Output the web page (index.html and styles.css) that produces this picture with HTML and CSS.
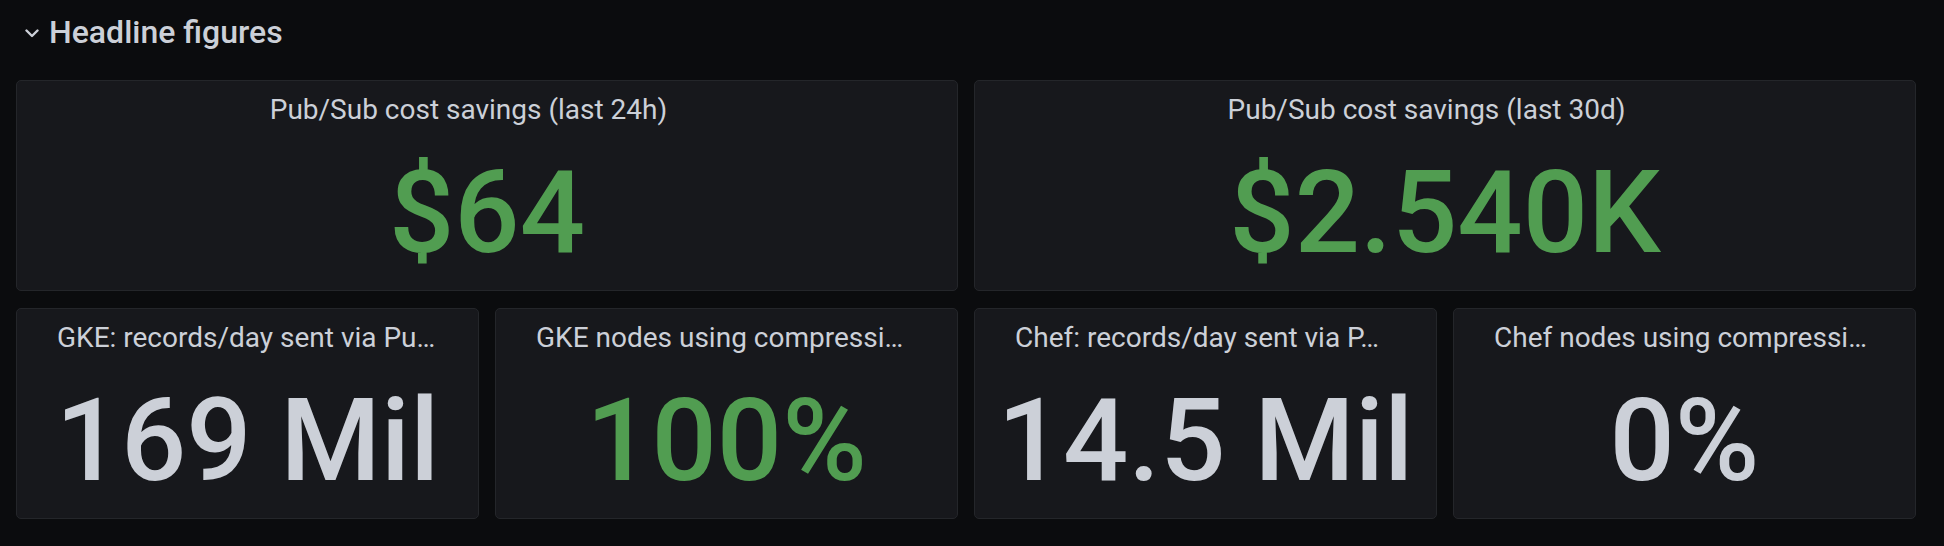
FILE: index.html
```html
<!DOCTYPE html>
<html lang="en">
<head>
<meta charset="utf-8">
<title>Headline figures</title>
<link rel="stylesheet" href="styles.css">
</head>
<body>
<main class="dashboard">
  <header class="row-header">
    <svg class="chevron" width="14" height="9" viewBox="0 0 14 9" aria-hidden="true">
      <path d="M1.5 1.5 L7 7 L12.5 1.5" fill="none" stroke="currentColor" stroke-width="2.4" stroke-linecap="round" stroke-linejoin="round"/>
    </svg>
    <h2 class="row-title">Headline figures</h2>
  </header>
  <section class="grid">
    <article class="panel panel--wide">
      <div class="panel-header panel-header--menu"><span class="panel-title">Pub/Sub cost savings (last 24h)</span></div>
      <div class="panel-value value--green">$64</div>
    </article>
    <article class="panel panel--wide">
      <div class="panel-header panel-header--menu"><span class="panel-title">Pub/Sub cost savings (last 30d)</span></div>
      <div class="panel-value value--green">$2.540K</div>
    </article>
    <article class="panel">
      <div class="panel-header"><span class="panel-title">GKE: records/day sent via Pu…</span></div>
      <div class="panel-value value--text">169 Mil</div>
    </article>
    <article class="panel">
      <div class="panel-header"><span class="panel-title">GKE nodes using compressi…</span></div>
      <div class="panel-value value--green">100%</div>
    </article>
    <article class="panel">
      <div class="panel-header"><span class="panel-title">Chef: records/day sent via P…</span></div>
      <div class="panel-value value--text">14.5 Mil</div>
    </article>
    <article class="panel">
      <div class="panel-header"><span class="panel-title">Chef nodes using compressi…</span></div>
      <div class="panel-value value--text">0%</div>
    </article>
  </section>
</main>
</body>
</html>
```
FILE: styles.css
```css
html, body {
  margin: 0;
  padding: 0;
  background: #0b0c0e;
}

body {
  font-family: Roboto, "Liberation Sans", sans-serif;
  color: #ccd0d8;
  width: 1944px;
  height: 546px;
  overflow: hidden;
}

.dashboard {
  padding: 0 28px 0 16px;
}

.row-header {
  height: 64px;
  display: flex;
  align-items: center;
  gap: 10px;
  padding-left: 9px;
  margin-bottom: 16px;
}

.chevron {
  color: #ccd0d8;
  flex: none;
  margin-top: 2px;
}

.row-title {
  margin: 0;
  font-size: 32px;
  line-height: 40px;
  font-weight: 500;
  color: #ccd0d8;
}

.grid {
  display: grid;
  grid-template-columns: repeat(4, 463px);
  grid-auto-rows: 211px;
  column-gap: 16px;
  row-gap: 17px;
}

.panel {
  background: #17181c;
  border: 1px solid #24262a;
  border-radius: 5px;
  display: flex;
  flex-direction: column;
  min-width: 0;
  overflow: hidden;
}

.panel--wide {
  grid-column: span 2;
}

.panel-header {
  padding: 13px 38px 0 40px;
  height: 32px;
  display: flex;
  justify-content: flex-start;
  min-width: 0;
}

.panel-header--menu {
  justify-content: center;
  padding-right: 77px;
}

.panel-title {
  font-size: 28px;
  line-height: 32px;
  font-weight: 400;
  color: #ccd0d8;
  white-space: nowrap;
  overflow: hidden;
  text-overflow: ellipsis;
  min-width: 0;
}

.panel-value {
  padding-top: 29px;
  text-align: center;
  font-size: 115px;
  line-height: 115px;
  font-weight: 500;
  white-space: nowrap;
}

.value--green {
  color: #519d51;
}

.value--text {
  color: #ccd0d8;
}
```
